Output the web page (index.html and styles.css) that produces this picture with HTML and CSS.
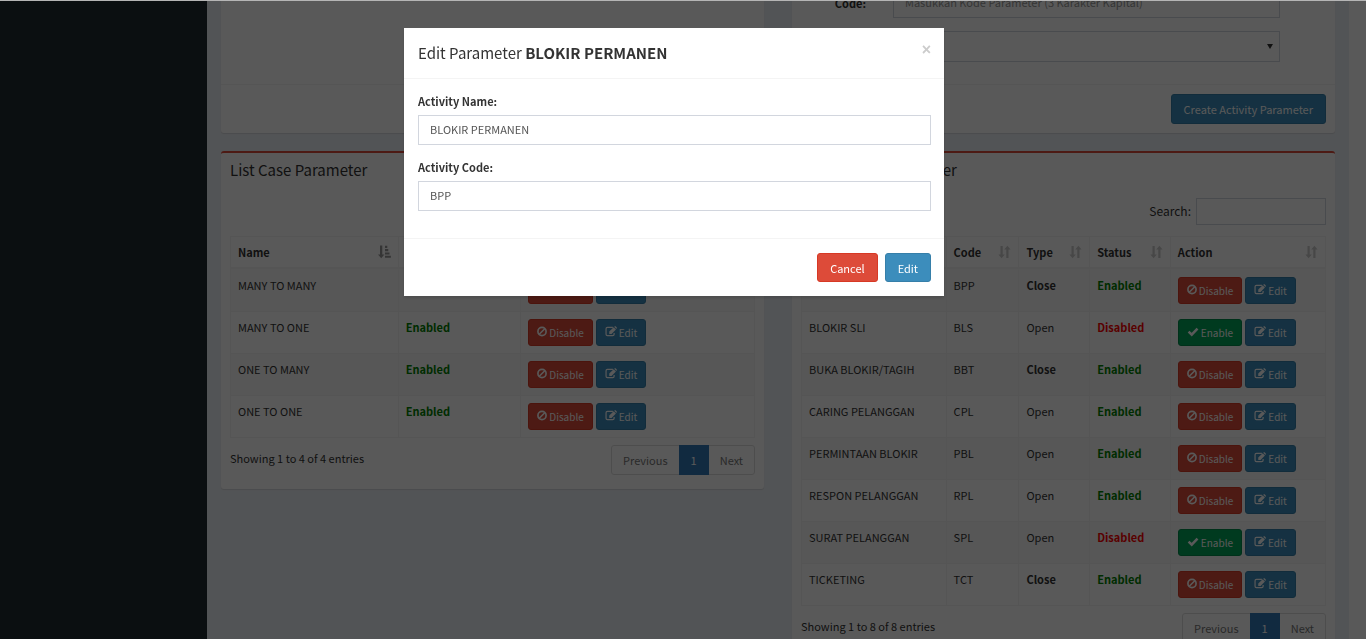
FILE: index.html
```html
<!DOCTYPE html>
<html lang="id">
<head>
<meta charset="utf-8">
<title>Parameter</title>
<link rel="stylesheet" href="styles.css">
</head>
<body>
<svg class="sprite" aria-hidden="true">
  <symbol id="ban" viewBox="0 0 12 12"><circle cx="6" cy="6" r="4.900" fill="none" stroke="currentColor" stroke-width="2"/><path d="M2.700 9.300L9.300 2.700" stroke="currentColor" stroke-width="2"/></symbol>
  <symbol id="edit" viewBox="0 0 13 12"><path d="M8.600 1.600H2.600Q1.100 1.600 1.100 3.100V9Q1.100 10.500 2.600 10.500H8.400Q9.900 10.500 9.900 9V7.600" fill="none" stroke="currentColor" stroke-width="1.300"/><path d="M4.600 8.600V6.100L9.400 1.300L11.900 3.800L7.100 8.600ZM10 .9L10.700 .3Q11.200 0 11.600 .3L12.800 1.500Q13.100 1.900 12.800 2.400L12.300 3.200Z" fill="currentColor"/></symbol>
  <symbol id="check" viewBox="0 0 12 12"><path d="M1.200 6.200L4.600 9.400L10.900 2.900" fill="none" stroke="currentColor" stroke-width="2.800"/></symbol>
  <symbol id="sort" viewBox="0 0 13 14"><path d="M2.500 1H4.700V9.500H6.800L3.600 13.200L.4 9.500H2.500ZM8.300 13V4.500H6.200L9.400 .8L12.600 4.500H10.500V13Z" fill="currentColor"/></symbol>
  <symbol id="sort-asc" viewBox="0 0 13 14"><path d="M2 .5H4.300V9.500H6.400L3.200 13.200L0 9.500H2ZM7 .8H9.300V2.900H7ZM7 4.100H10.300V6.200H7ZM7 7.400H11.500V9.500H7ZM7 10.700H12.900V12.800H7Z" fill="currentColor"/></symbol>
</svg>

<div class="page">
  <aside class="sidebar"></aside>
  <main class="content">
    <section class="box form-box">
      <div class="form-body"></div>
      <div class="box-footer"></div>
    </section>
    <form class="box form-box">
      <div class="form-body">
        <div class="form-row">
          <label for="new-code">Code:</label>
          <input id="new-code" class="control" type="text" placeholder="Masukkan Kode Parameter (3 Karakter Kapital)">
        </div>
        <div class="form-row">
          <label for="new-type">Type:</label>
          <span class="select-wrap"><select id="new-type" class="control"><option></option></select></span>
        </div>
      </div>
      <div class="box-footer"><button type="button" class="btn primary">Create Activity Parameter</button></div>
    </form>

    <section class="box danger">
      <h3 class="box-title">List Case Parameter</h3>
      <div class="box-body">
        <div class="search"><label for="s1">Search:</label><input id="s1" class="control" type="search"></div>
        <table class="grid case-grid">
          <thead><tr>
            <th class="c-name"><span class="th">Name<svg class="sort on"><use href="#sort-asc"/></svg></span></th>
            <th class="c-status"><span class="th">Status<svg class="sort"><use href="#sort"/></svg></span></th>
            <th><span class="th">Action<svg class="sort"><use href="#sort"/></svg></span></th>
          </tr></thead>
          <tbody>
            <tr><td>MANY TO MANY</td><td class="on">Enabled</td><td><div class="acts"><button class="btn xs danger-btn"><svg><use href="#ban"/></svg>Disable</button><button class="btn xs primary"><svg><use href="#edit"/></svg>Edit</button></div></td></tr>
            <tr><td>MANY TO ONE</td><td class="on">Enabled</td><td><div class="acts"><button class="btn xs danger-btn"><svg><use href="#ban"/></svg>Disable</button><button class="btn xs primary"><svg><use href="#edit"/></svg>Edit</button></div></td></tr>
            <tr><td>ONE TO MANY</td><td class="on">Enabled</td><td><div class="acts"><button class="btn xs danger-btn"><svg><use href="#ban"/></svg>Disable</button><button class="btn xs primary"><svg><use href="#edit"/></svg>Edit</button></div></td></tr>
            <tr><td>ONE TO ONE</td><td class="on">Enabled</td><td><div class="acts"><button class="btn xs danger-btn"><svg><use href="#ban"/></svg>Disable</button><button class="btn xs primary"><svg><use href="#edit"/></svg>Edit</button></div></td></tr>
          </tbody>
        </table>
        <div class="table-foot">
          <span>Showing 1 to 4 of 4 entries</span>
          <nav class="pager"><a href="#">Previous</a><a href="#" class="current">1</a><a href="#">Next</a></nav>
        </div>
      </div>
    </section>

    <section class="box danger">
      <h3 class="box-title">List Activity Parameter</h3>
      <div class="box-body">
        <div class="search"><label for="s2">Search:</label><input id="s2" class="control" type="search"></div>
        <table class="grid activity-grid">
          <thead><tr>
            <th class="c-name"><span class="th">Name<svg class="sort on"><use href="#sort-asc"/></svg></span></th>
            <th class="c-code"><span class="th">Code<svg class="sort"><use href="#sort"/></svg></span></th>
            <th class="c-type"><span class="th">Type<svg class="sort"><use href="#sort"/></svg></span></th>
            <th class="c-status"><span class="th">Status<svg class="sort"><use href="#sort"/></svg></span></th>
            <th><span class="th">Action<svg class="sort"><use href="#sort"/></svg></span></th>
          </tr></thead>
          <tbody>
            <tr><td>BLOKIR PERMANEN</td><td>BPP</td><td><b>Close</b></td><td class="on">Enabled</td><td><div class="acts"><button class="btn xs danger-btn"><svg><use href="#ban"/></svg>Disable</button><button class="btn xs primary"><svg><use href="#edit"/></svg>Edit</button></div></td></tr>
            <tr><td>BLOKIR SLI</td><td>BLS</td><td>Open</td><td class="off">Disabled</td><td><div class="acts"><button class="btn xs success"><svg><use href="#check"/></svg>Enable</button><button class="btn xs primary"><svg><use href="#edit"/></svg>Edit</button></div></td></tr>
            <tr><td>BUKA BLOKIR/TAGIH</td><td>BBT</td><td><b>Close</b></td><td class="on">Enabled</td><td><div class="acts"><button class="btn xs danger-btn"><svg><use href="#ban"/></svg>Disable</button><button class="btn xs primary"><svg><use href="#edit"/></svg>Edit</button></div></td></tr>
            <tr><td>CARING PELANGGAN</td><td>CPL</td><td>Open</td><td class="on">Enabled</td><td><div class="acts"><button class="btn xs danger-btn"><svg><use href="#ban"/></svg>Disable</button><button class="btn xs primary"><svg><use href="#edit"/></svg>Edit</button></div></td></tr>
            <tr><td>PERMINTAAN BLOKIR</td><td>PBL</td><td>Open</td><td class="on">Enabled</td><td><div class="acts"><button class="btn xs danger-btn"><svg><use href="#ban"/></svg>Disable</button><button class="btn xs primary"><svg><use href="#edit"/></svg>Edit</button></div></td></tr>
            <tr><td>RESPON PELANGGAN</td><td>RPL</td><td>Open</td><td class="on">Enabled</td><td><div class="acts"><button class="btn xs danger-btn"><svg><use href="#ban"/></svg>Disable</button><button class="btn xs primary"><svg><use href="#edit"/></svg>Edit</button></div></td></tr>
            <tr><td>SURAT PELANGGAN</td><td>SPL</td><td>Open</td><td class="off">Disabled</td><td><div class="acts"><button class="btn xs success"><svg><use href="#check"/></svg>Enable</button><button class="btn xs primary"><svg><use href="#edit"/></svg>Edit</button></div></td></tr>
            <tr><td>TICKETING</td><td>TCT</td><td><b>Close</b></td><td class="on">Enabled</td><td><div class="acts"><button class="btn xs danger-btn"><svg><use href="#ban"/></svg>Disable</button><button class="btn xs primary"><svg><use href="#edit"/></svg>Edit</button></div></td></tr>
          </tbody>
        </table>
        <div class="table-foot">
          <span>Showing 1 to 8 of 8 entries</span>
          <nav class="pager"><a href="#">Previous</a><a href="#" class="current">1</a><a href="#">Next</a></nav>
        </div>
      </div>
    </section>
  </main>
</div>

<div class="overlay">
  <form class="modal" role="dialog" aria-labelledby="modal-title">
    <header class="modal-header">
      <h4 id="modal-title">Edit Parameter <b>BLOKIR PERMANEN</b></h4>
      <button type="button" class="close" aria-label="Close">×</button>
    </header>
    <div class="modal-body">
      <label for="act-name">Activity Name:</label>
      <input id="act-name" class="control" type="text" value="BLOKIR PERMANEN">
      <label for="act-code">Activity Code:</label>
      <input id="act-code" class="control" type="text" value="BPP">
    </div>
    <footer class="modal-footer">
      <button type="button" class="btn danger-btn">Cancel</button>
      <button type="button" class="btn primary">Edit</button>
    </footer>
  </form>
</div>
</body>
</html>
```

FILE: styles.css
```css
* { box-sizing: border-box; }

body {
  margin: 0;
  height: 100vh;
  overflow: hidden;
  border-top: 1px solid #b5b5b5;
  background: #fff;
  color: #333;
  font: 11px/18px "Noto Sans CJK SC", "Noto Sans", sans-serif;
}

button, input, select { font: inherit; }
h3, h4 { margin: 0; font-weight: 400; }
.sprite { position: absolute; width: 0; height: 0; }

.page { display: flex; height: 100%; padding-right: 17px; }
.sidebar { flex: none; width: 207px; background: #222d32; }

.content {
  flex: 1;
  display: grid;
  grid-template-columns: 1fr 1fr;
  grid-template-rows: auto auto;
  align-items: start;
  align-content: start;
  gap: 18px 28px;
  padding: 0 14px;
  background: #ecf0f5;
}

.box {
  background: #fff;
  border-radius: 3px;
  box-shadow: 0 1px 1px rgba(0, 0, 0, .1);
}
.danger { border-top: 2px solid #dd4b39; }

/* Create form */
.form-box { display: flex; flex-direction: column; align-self: stretch; border-radius: 0 0 3px 3px; }
.form-body {
  flex: 1;
  display: flex;
  flex-direction: column;
  gap: 13px;
  margin-top: -14px;
  padding: 0 55px 22px 14px;
}
.form-row { display: flex; align-items: center; gap: 27px; }
.form-row label { width: 60px; text-align: right; font-weight: 700; }
.form-row .control { flex: 1; height: 31px; }
.select-wrap { flex: 1; display: flex; position: relative; }
.select-wrap select { appearance: none; }
.select-wrap::after {
  content: "";
  position: absolute;
  right: 7px;
  top: 13px;
  border: 3px solid transparent;
  border-top: 5px solid #333;
  border-bottom: 0;
}
.box-footer {
  display: flex;
  justify-content: flex-end;
  min-height: 49px;
  padding: 9px;
  border-top: 1px solid #f4f4f4;
}

.control {
  width: 100%;
  height: 30px;
  padding: 0 11px 2px;
  border: 1px solid #d2d6de;
  border-radius: 0;
  background: #fff;
  color: #555;
  outline: 0;
}
.control::placeholder { color: #999; opacity: 1; }

.btn {
  height: 30px;
  padding: 0 12px;
  border: 1px solid;
  border-radius: 3px;
  color: #fff;
  white-space: nowrap;
}
.primary { background: #3c8dbc; border-color: #367fa9; }
.danger-btn { background: #dd4b39; border-color: #d73925; }
.success { background: #00a65a; border-color: #008d4c; }
.xs {
  display: flex;
  align-items: center;
  gap: 2px;
  height: 27px;
  padding: 0 8px;
  font-size: 10px;
}
.xs svg { width: 12px; height: 11px; margin-bottom: 3px; }
.xs.danger-btn svg { width: 10px; }

/* List boxes */
.box-title { padding: 7px 9px 9px; font-size: 15px; line-height: 20px; }
.box-body { padding: 9px 9px 14px; }
.search { display: flex; justify-content: flex-end; align-items: center; gap: 5px; margin-bottom: 11px; }
.search label { padding-bottom: 2px; font-size: 12px; }
.search .control { width: 130px; height: 27px; }

.grid {
  width: 100%;
  table-layout: fixed;
  border-spacing: 0;
  border: 1px solid #f4f4f4;
  border-width: 1px 0 1px 1px;
}
.grid th, .grid td { border-right: 1px solid #f4f4f4; line-height: 16px; text-align: left; vertical-align: top; }
.grid th { padding: 7px; border-bottom: 2px solid #f4f4f4; }
.grid td { padding: 7px; border-top: 1px solid #f4f4f4; }
.grid tbody tr:first-child td { border-top-color: #f9f9f9; }
.grid tbody tr:nth-child(odd) { background: #f9f9f9; }
.th { display: flex; justify-content: space-between; align-items: center; }
.sort { width: 13px; height: 14px; color: #ccc; }
.sort.on { color: #999; }
.case-grid .c-name { width: 32%; }
.case-grid .c-status { width: 23.4%; }
.activity-grid .c-name { width: 27.6%; }
.activity-grid .c-code { width: 13.9%; }
.activity-grid .c-type { width: 13.5%; }
.activity-grid .c-status { width: 15.4%; }
td.on { color: green; font-weight: 700; }
td.off { color: red; font-weight: 700; }
.acts { display: flex; gap: 3px; }

.table-foot { display: flex; justify-content: space-between; padding-top: 7px; }
.table-foot > span { padding-top: 4px; }
.pager { display: flex; border: 1px solid #ddd; border-radius: 3px; }
.pager a { padding: 5px 11px; color: #777; text-decoration: none; }
.pager .current { margin: -1px 0; padding: 6px 12px; background: #337ab7; color: #fff; }

/* Dialog */
.overlay {
  position: fixed;
  inset: 1px 0 0;
  padding: 27px 18px 0 0;
  background: rgba(0, 0, 0, .65);
}
.modal { width: 540px; margin: 0 auto; background: #fff; box-shadow: 0 2px 3px rgba(0, 0, 0, .13); }
.modal-header {
  display: flex;
  justify-content: space-between;
  align-items: flex-start;
  padding: 14px 13px 15px 14px;
  border-bottom: 1px solid #f4f4f4;
}
.modal-header h4 { font-size: 15px; line-height: 21px; }
.close { padding: 0; border: 0; background: none; color: #ccc; font: 700 16px/16px "Liberation Sans", sans-serif; }
.modal-body { padding: 13px 13px 27px 14px; }
.modal-body label { display: block; margin-bottom: 5px; font-weight: 700; }
.modal-body .control { display: block; margin-bottom: 13px; }
.modal-body .control:last-child { margin-bottom: 0; }
.modal-footer { display: flex; justify-content: flex-end; gap: 7px; padding: 14px 13px; border-top: 1px solid #f4f4f4; }
.modal-footer .btn { height: 29px; }
```
